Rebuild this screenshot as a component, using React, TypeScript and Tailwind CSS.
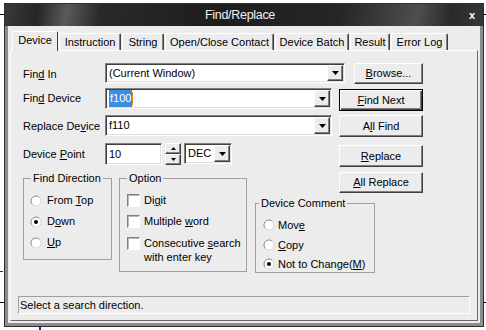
import React from 'react';

// classic 3D edges
const raised =
  'bg-[#ececec] border border-t-white border-l-white border-r-[#404040] border-b-[#404040] shadow-[inset_-1px_-1px_0_#808080]';
const sunken =
  'bg-white border border-t-[#808080] border-l-[#808080] border-r-white border-b-white shadow-[inset_1px_1px_0_#404040,inset_-1px_-1px_0_#dedede]';

function U({ children }: { children: React.ReactNode }) {
  return <span className="underline underline-offset-[1px]">{children}</span>;
}

function DownArrow() {
  return (
    <svg width="7" height="4" viewBox="0 0 7 4">
      <path d="M0 0h7L3.5 4z" fill="#000" />
    </svg>
  );
}

function Combo({ className, children }: { className: string; children?: React.ReactNode }) {
  return (
    <div className={`${sunken} ${className} p-[1px] flex`}>
      <div className="flex-1 flex items-center pl-[2px] overflow-hidden whitespace-nowrap">{children}</div>
      <div className={`${raised} w-[16px] flex items-center justify-center`}>
        <DownArrow />
      </div>
    </div>
  );
}

function Button({ className, children, isDefault }: { className: string; children: React.ReactNode; isDefault?: boolean }) {
  const edge = isDefault
    ? 'bg-[#ececec] border border-black shadow-[inset_1px_1px_0_#fff,inset_-1px_-1px_0_#404040,inset_-2px_-2px_0_#808080]'
    : raised;
  return <div className={`${edge} ${className} flex items-center justify-center`}>{children}</div>;
}

function Radio({ checked }: { checked?: boolean }) {
  return (
    <svg width="12" height="12" viewBox="0 0 12 12" className="shrink-0">
      <circle cx="6" cy="6" r="5" fill="#fff" />
      <path d="M2.46 9.54A5 5 0 0 1 9.54 2.46" stroke="#8a8a8a" fill="none" />
      <path d="M9.54 2.46A5 5 0 0 1 2.46 9.54" stroke="#d8d8d8" fill="none" />
      {checked && <circle cx="6" cy="6" r="2" fill="#000" />}
    </svg>
  );
}

function Check() {
  return (
    <div className="w-[13px] h-[13px] shrink-0 bg-white border border-t-[#808080] border-l-[#808080] border-r-white border-b-white shadow-[inset_1px_1px_0_#b8b8b8]" />
  );
}

const tabs = [
  { label: 'Instruction', w: 'w-[62px]' },
  { label: 'String', w: 'w-[42px]' },
  { label: 'Open/Close Contact', w: 'w-[109px]' },
  { label: 'Device Batch', w: 'w-[74px]' },
  { label: 'Result', w: 'w-[40px]' },
  { label: 'Error Log', w: 'w-[57px]' },
];

export default function App() {
  return (
    <div className="relative w-[486px] h-[330px] bg-white overflow-hidden font-['Liberation_Sans',Arial,sans-serif] text-[11px] text-black">
      {/* bits of the application behind the dialog */}
      <div className="absolute left-0 top-[14px] w-[4px] h-px bg-black" />
      <div className="absolute right-0 top-[14px] w-[3px] h-px bg-black" />
      <div className="absolute left-0 top-[271px] w-[3px] h-px bg-[#2020c0]" />
      <div className="absolute left-0 top-[302px] w-[4px] h-px bg-black" />
      <div className="absolute right-0 top-[302px] w-[3px] h-px bg-black" />
      <div className="absolute left-[39px] top-[327px] w-[2px] h-[3px] bg-[#2020c0]" />

      <div className="ml-[4px] mt-[3px] w-[480px] h-[324px] border border-[#2e2e2e] flex flex-col">
        {/* Title bar */}
        <div className="h-[22px] flex items-center bg-[linear-gradient(100deg,#3a3a3a_0%,#262626_7%,#5a5a5a_13%,#2a2a2a_20%,#1d1d1d_45%,#262626_70%,#4e4e4e_86%,#2a2a2a_93%,#363636_100%)]">
          <div className="flex-1 text-center text-[12.5px] tracking-[-0.3px] text-[#f0f0f0] pl-[8px]">Find/Replace</div>
          <div className="w-[10px] mr-[6px] text-white font-bold text-[11px] leading-[11px] text-center">x</div>
        </div>

        {/* Body */}
        <div className="flex-1 flex flex-col bg-[#ececec] border-x-[3px] border-b-[3px] border-[#8c8c8c] px-[2px] pt-[2px] pb-[2px]">
          {/* Tab strip */}
          <div className="h-[22px] flex items-end pl-[2px]">
            <div className="relative z-10 -mb-px w-[46px] h-[20px] bg-[#ececec] border-t border-l border-r border-t-white border-l-white border-r-[#404040] rounded-t-[2px] flex items-center justify-center pb-[2px]">
              Device
            </div>
            {tabs.map((t) => (
              <div
                key={t.label}
                className={`${t.w} h-[17px] ml-px bg-[#ececec] border-t border-l border-r border-t-white border-l-white border-r-[#404040] shadow-[inset_-1px_0_0_#808080] rounded-t-[2px] flex items-center justify-center`}
              >
                {t.label}
              </div>
            ))}
          </div>

          {/* Tab panel */}
          <div className="flex-1 flex flex-col border border-t-white border-l-white border-r-[#6a6a6a] border-b-[#6a6a6a]">
            <div className="pl-[12px] pt-[12px]">
              {/* Find In */}
              <div className="flex items-start h-[21px]">
                <div className="w-[82px] h-[21px] flex items-center pt-[2px]">
                  <span>
                    Fin<U>d</U> In
                  </span>
                </div>
                <Combo className="w-[240px] h-[20px]">(Current Window)</Combo>
                <Button className="ml-[9px] w-[69px] h-[21px]">
                  <span>
                    <U>B</U>rowse...
                  </span>
                </Button>
              </div>

              {/* Find Device */}
              <div className="flex items-start h-[23px] mt-[4px]">
                <div className="w-[82px] h-[21px] flex items-center">
                  <span>
                    Fin<U>d</U> Device
                  </span>
                </div>
                <Combo className="w-[227px] h-[21px]">
                  <span className="bg-[#3d8ee0] text-white px-px">f100</span>
                  <span className="w-px h-[13px] bg-[#e0801a]" />
                </Combo>
                <Button isDefault className="ml-[7px] mt-[1px] w-[84px] h-[22px]">
                  <span>
                    <U>F</U>ind Next
                  </span>
                </Button>
              </div>

              {/* Replace Device */}
              <div className="flex items-start h-[22px] mt-[4px]">
                <div className="w-[82px] h-[21px] flex items-center pt-[1px]">
                  <span>
                    Replace De<U>v</U>ice
                  </span>
                </div>
                <Combo className="w-[227px] h-[21px]">f110</Combo>
                <Button className="ml-[7px] w-[84px] h-[22px]">
                  <span>
                    A<U>l</U>l Find
                  </span>
                </Button>
              </div>

              {/* Device Point */}
              <div className="flex items-start h-[24px] mt-[6px]">
                <div className="w-[82px] h-[22px] flex items-center">
                  <span>
                    Device <U>P</U>oint
                  </span>
                </div>
                <div className="w-[234px] flex items-start">
                  <div className={`${sunken} w-[57px] h-[22px] flex items-center pl-[3px]`}>10</div>
                  <div className="ml-[3px] w-[16px] h-[22px] flex flex-col">
                    <div className={`${raised} h-[11px] flex items-center justify-center`}>
                      <svg width="5" height="3" viewBox="0 0 5 3">
                        <path d="M0 3h5L2.5 0z" fill="#000" />
                      </svg>
                    </div>
                    <div className={`${raised} h-[11px] flex items-center justify-center`}>
                      <svg width="5" height="3" viewBox="0 0 5 3">
                        <path d="M0 0h5L2.5 3z" fill="#000" />
                      </svg>
                    </div>
                  </div>
                  <Combo className="ml-[3px] w-[48px] h-[21px]">DEC</Combo>
                </div>
                <Button className="mt-[2px] w-[84px] h-[22px]">
                  <span>
                    <U>R</U>eplace
                  </span>
                </Button>
              </div>

              {/* Groups */}
              <div className="flex items-start mt-[4px]">
                <fieldset className="mt-[1px] w-[89px] h-[88px] border border-[#a0a0a0] p-0 m-0 pl-[6px]">
                  <legend className="ml-[1px] px-[2px] leading-[13px]">Find Direction</legend>
                  <div className="pt-[5px]">
                    <div className="h-[21px] flex items-center gap-[5px]">
                      <Radio />
                      <span>
                        From <U>T</U>op
                      </span>
                    </div>
                    <div className="h-[21px] flex items-center gap-[5px]">
                      <Radio checked />
                      <span>
                        D<U>o</U>wn
                      </span>
                    </div>
                    <div className="h-[21px] flex items-center gap-[5px]">
                      <Radio />
                      <span>
                        <U>U</U>p
                      </span>
                    </div>
                  </div>
                </fieldset>

                <fieldset className="ml-[7px] mt-[1px] w-[128px] h-[100px] border border-[#a0a0a0] p-0 m-0 pl-[7px]">
                  <legend className="ml-[0px] px-[2px] leading-[13px]">Option</legend>
                  <div className="pt-[5px]">
                    <div className="h-[21px] flex items-center gap-[4px]">
                      <Check />
                      <span>
                        Di<U>g</U>it
                      </span>
                    </div>
                    <div className="h-[21px] flex items-center gap-[4px]">
                      <Check />
                      <span>
                        Multiple <U>w</U>ord
                      </span>
                    </div>
                    <div className="flex items-start gap-[4px]">
                      <div className="mt-[5px]">
                        <Check />
                      </div>
                      <div className="pt-[4px] leading-[14px]">
                        Consecutive <U>s</U>earch
                        <br />
                        with enter key
                      </div>
                    </div>
                  </div>
                </fieldset>

                <div className="ml-[8px] flex flex-col">
                  <Button className="ml-[84px] mt-[1px] w-[84px] h-[21px]">
                    <span>
                      <U>A</U>ll Replace
                    </span>
                  </Button>
                  <fieldset className="mt-[4px] w-[120px] h-[76px] border border-[#a0a0a0] p-0 m-0 pl-[7px]">
                    <legend className="-ml-[4px] px-[2px] leading-[13px]">Device Comment</legend>
                    <div className="pt-[5px]">
                      <div className="h-[20px] flex items-center gap-[3px]">
                        <Radio />
                        <span>
                          Mov<U>e</U>
                        </span>
                      </div>
                      <div className="h-[20px] flex items-center gap-[3px]">
                        <Radio />
                        <span>
                          <U>C</U>opy
                        </span>
                      </div>
                      <div className="h-[18px] flex items-center gap-[3px]">
                        <Radio checked />
                        <span>
                          Not to Change(<U>M</U>)
                        </span>
                      </div>
                    </div>
                  </fieldset>
                </div>
              </div>
            </div>

            {/* Status bar */}
            <div className="ml-[7px] mt-[23px] w-[452px] h-[18px] border border-t-[#a0a0a0] border-l-[#a0a0a0] border-r-white border-b-white flex items-center pl-px">
              Select a search direction.
            </div>
          </div>
        </div>
      </div>
    </div>
  );
}
